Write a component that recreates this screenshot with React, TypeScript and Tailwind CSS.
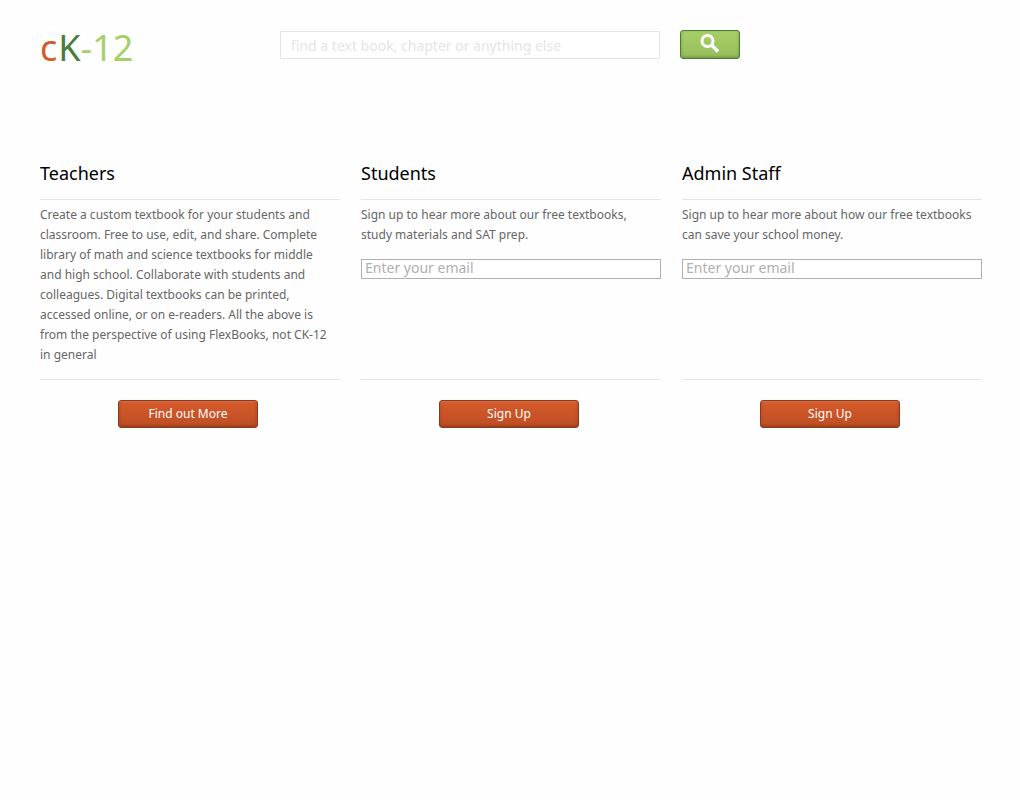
import type { ReactNode } from "react";

type ColumnProps = {
  title: string;
  text: string;
  action: string;
  emailId?: string;
};

function ActionButton({ children }: { children: ReactNode }) {
  return (
    <button
      type="button"
      className="h-7 w-[140px] rounded-[3px] border border-[#8a3a1c] bg-linear-to-b from-[#d65a2a] to-[#be4e24] text-xs text-white shadow-[inset_0_1px_2px_rgba(255,255,255,0.18),inset_0_-1px_3px_rgba(90,30,10,0.5)]"
    >
      {children}
    </button>
  );
}

function Column({ title, text, action, emailId }: ColumnProps) {
  return (
    <section className="flex flex-col">
      <h2 className="pb-3 text-lg leading-7 text-black">{title}</h2>
      <div className="grow border-y border-[#e5e5e5] pt-[5px] pb-[14px]">
        <p className="pr-2 text-xs leading-5 text-[#666666]">{text}</p>
        {emailId && (
          <div className="mt-[14px] flex h-5 items-end border border-[#b0b0b0] bg-white">
            <input
              id={emailId}
              type="email"
              aria-label="Email address"
              placeholder="Enter your email"
              className="h-5 w-full shrink-0 px-[3px] text-sm text-[#666666] placeholder:text-[#b0b0b0]"
            />
          </div>
        )}
      </div>
      <div className="flex justify-center pt-5 pr-1">
        <ActionButton>{action}</ActionButton>
      </div>
    </section>
  );
}

export default function App() {
  return (
    <div className="min-h-screen bg-[#fefefe] font-['Noto_Sans','Open_Sans',sans-serif]">
      <header className="flex items-start px-10 pt-[30px]">
        <a href="#" className="w-60 text-4xl leading-9 text-[#a5d065]">
          <span className="text-[#d35a2a]">c</span>
          <span className="ml-px text-[#4a7d3a]">K</span>-12
        </a>
        <form role="search" className="flex items-center gap-5">
          <input
            id="search"
            type="text"
            aria-label="Search"
            placeholder="find a text book, chapter or anything else"
            className="h-7 w-[380px] border border-[#e5e5e5] bg-white px-[10px] pt-px text-sm text-[#666666] placeholder:text-[#e5e5e5]"
          />
          <button
            type="submit"
            aria-label="Search"
            className="flex h-[29px] w-[60px] items-center justify-center rounded-[3px] border border-[#4a7d3a] bg-linear-to-b from-[#a8d068] to-[#97bd5b] shadow-[inset_0_-1px_3px_rgba(60,100,40,0.5)]"
          >
            <svg width="20" height="20" viewBox="0 0 20 20" fill="none" stroke="#ffffff" className="mb-px">
              <circle cx="7.5" cy="7" r="5.5" strokeWidth="3" />
              <path d="M11.5 11 L18 17.5" strokeWidth="3.5" />
            </svg>
          </button>
        </form>
      </header>
      <main className="grid grid-cols-3 gap-[21px] pt-[93px] pr-[38px] pl-10">
        <Column
          title="Teachers"
          text="Create a custom textbook for your students and classroom. Free to use, edit, and share. Complete library of math and science textbooks for middle and high school. Collaborate with students and colleagues. Digital textbooks can be printed, accessed online, or on e-readers. All the above is from the perspective of using FlexBooks, not CK-12 in general"
          action="Find out More"
        />
        <Column
          title="Students"
          text="Sign up to hear more about our free textbooks, study materials and SAT prep."
          action="Sign Up"
          emailId="student-email"
        />
        <Column
          title="Admin Staff"
          text="Sign up to hear more about how our free textbooks can save your school money."
          action="Sign Up"
          emailId="staff-email"
        />
      </main>
    </div>
  );
}
